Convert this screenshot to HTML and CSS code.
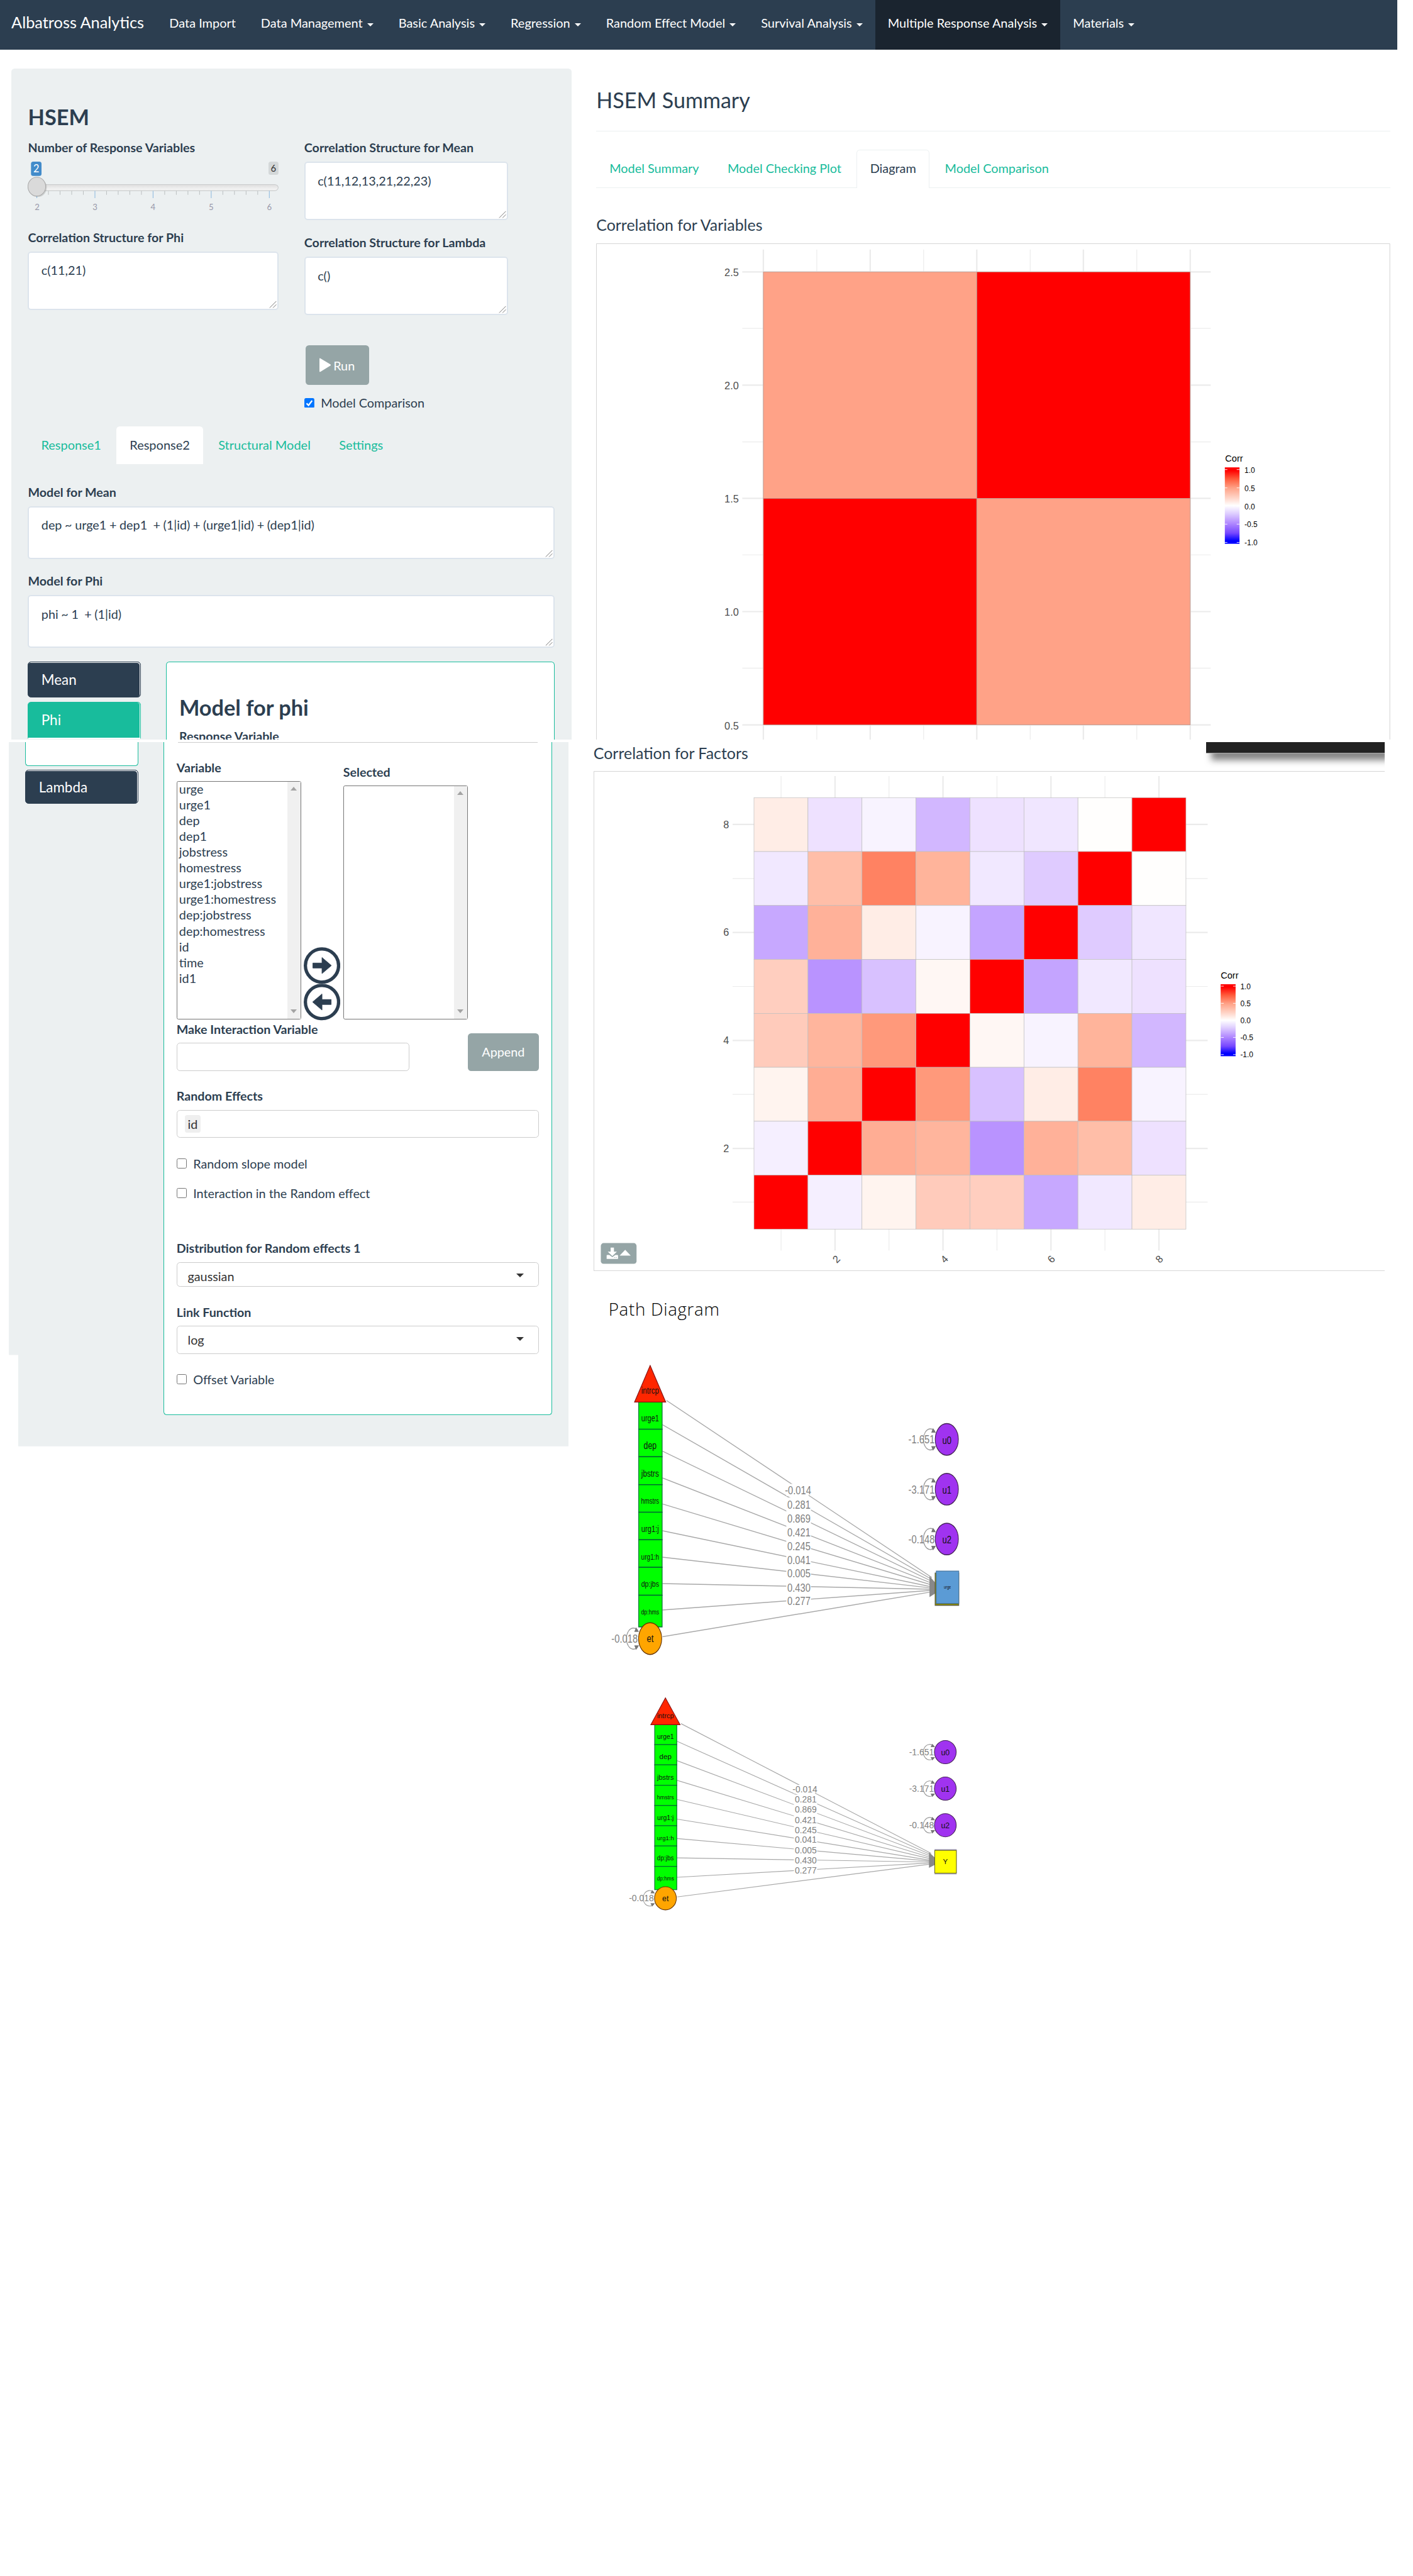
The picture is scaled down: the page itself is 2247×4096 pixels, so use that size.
FILE: index.html
```html
<!DOCTYPE html>
<html lang="en">
<head>
<meta charset="utf-8">
<title>Albatross Analytics</title>
<link rel="stylesheet" href="styles.css">
</head>
<body>
<nav class="navbar">
  <span class="brand">Albatross Analytics</span>
  <span class="nav-item">Data Import</span>
  <span class="nav-item">Data Management<i class="caret"></i></span>
  <span class="nav-item">Basic Analysis<i class="caret"></i></span>
  <span class="nav-item">Regression<i class="caret"></i></span>
  <span class="nav-item">Random Effect Model<i class="caret"></i></span>
  <span class="nav-item">Survival Analysis<i class="caret"></i></span>
  <span class="nav-item active">Multiple Response Analysis<i class="caret"></i></span>
  <span class="nav-item">Materials<i class="caret"></i></span>
</nav>
<main class="page">
  <aside class="sidebar">
    <section class="well well-top">
      <h2 class="title">HSEM</h2>
      <div class="params">
        <div class="params-left">
          <div class="label">Number of Response Variables</div>
          <svg class="slider" viewBox="51 283 453 130">
            <defs><linearGradient id="track" x1="0" y1="0" x2="0" y2="1"><stop offset="0" stop-color="#dedede"/><stop offset="1" stop-color="#f8f8f8"/></linearGradient></defs>
            <rect x="57" y="292" width="19" height="26" rx="4" fill="#428bca"/>
            <text x="66.500" y="311" class="s-badge on">2</text>
            <rect x="486" y="292" width="18" height="24" rx="4" fill="#d4d8d9"/>
            <text x="495" y="310" class="s-badge">6</text>
            <rect x="52" y="333.500" width="451.500" height="11" rx="6" fill="url(#track)" stroke="#c9cbcc" stroke-width="1.200"/>
            <path d="M88.500 345v7M109.500 345v7M130.500 345v7M151.500 345v7M193.500 345v7M214.500 345v7M235.500 345v7M256.500 345v7M298.500 345v7M319.500 345v7M340.500 345v7M361.500 345v7M403.500 345v7M424.500 345v7M445.500 345v7M466.500 345v7" stroke="#b4b8ba"/>
            <path d="M67.500 345v13M172.500 345v13M277.500 345v13M382.500 345v13M487.500 345v13" stroke="#8fbadf" stroke-width="1.200"/>
            <ellipse cx="69" cy="339" rx="16.500" ry="17" fill="#000" opacity=".13"/>
            <ellipse cx="67.500" cy="337.300" rx="16" ry="17" fill="#dadada" stroke="#ababab" stroke-width="1.200"/>
            <text x="68" y="379" class="s-tick">2</text><text x="172.500" y="379" class="s-tick">3</text><text x="277.500" y="379" class="s-tick">4</text><text x="382.500" y="379" class="s-tick">5</text><text x="487.500" y="379" class="s-tick">6</text>
          </svg>
          <div class="label">Correlation Structure for Phi</div>
          <div class="area">c(11,21)<svg class="grip" viewBox="0 0 14 14"><path d="M1 13L13 1M7 13l6-6"/></svg></div>
        </div>
        <div class="params-right">
          <div class="label">Correlation Structure for Mean</div>
          <div class="area">c(11,12,13,21,22,23)<svg class="grip" viewBox="0 0 14 14"><path d="M1 13L13 1M7 13l6-6"/></svg></div>
          <div class="label lambda-label">Correlation Structure for Lambda</div>
          <div class="area">c()<svg class="grip" viewBox="0 0 14 14"><path d="M1 13L13 1M7 13l6-6"/></svg></div>
          <div class="btn run"><svg class="play" viewBox="0 0 21 26"><path d="M0 2Q0 0 2 1L20 12Q21 13 20 14L2 25Q0 26 0 24z" fill="#fff"/></svg>Run</div>
          <div class="check compare"><svg class="box" viewBox="0 0 18 18"><rect width="18" height="18" rx="3" fill="#0075ff"/><path d="M4 9.500l3.500 3.500L14 4.500" fill="none" stroke="#fff" stroke-width="2.600"/></svg>Model Comparison</div>
        </div>
      </div>
      <div class="tabs side-tabs">
        <span class="tab">Response1</span><span class="tab current">Response2</span><span class="tab">Structural Model</span><span class="tab">Settings</span>
      </div>
      <div class="label mean-label">Model for Mean</div>
      <div class="area wide">dep ~ urge1 + dep1&nbsp; + (1|id) + (urge1|id) + (dep1|id)<svg class="grip" viewBox="0 0 14 14"><path d="M1 13L13 1M7 13l6-6"/></svg></div>
      <div class="label phi-label">Model for Phi</div>
      <div class="area wide">phi ~ 1&nbsp; + (1|id)<svg class="grip" viewBox="0 0 14 14"><path d="M1 13L13 1M7 13l6-6"/></svg></div>
      <div class="split">
        <div class="pills">
          <div class="pill">Mean</div>
          <div class="pill phi">Phi</div>
        </div>
        <div class="card card-top">
          <h2 class="title">Model for phi</h2>
          <div class="label">Response Variable</div>
        </div>
      </div>
    </section>
    <section class="well well-bottom">
      <div class="split">
        <div class="pills">
          <div class="pill-rest"></div>
          <div class="pill lambda">Lambda</div>
        </div>
        <div class="card card-bottom">
          <div class="select-edge"></div>
          <div class="picker">
            <div class="pick">
              <div class="label">Variable</div>
              <div class="list">
                <ul class="options"><li>urge</li><li>urge1</li><li>dep</li><li>dep1</li><li>jobstress</li><li>homestress</li><li>urge1:jobstress</li><li>urge1:homestress</li><li>dep:jobstress</li><li>dep:homestress</li><li>id</li><li>time</li><li>id1</li></ul>
                <div class="scroll"><i class="up"></i><i class="down"></i></div>
              </div>
            </div>
            <div class="arrows">
              <svg viewBox="0 0 66 66"><circle cx="33" cy="33" r="30" fill="#fff" stroke="#2c3e50" stroke-width="6"/><path d="M16.500 28.500h16.500v-10L50 33 33 47.500v-10H16.500z" fill="#2c3e50" stroke="#2c3e50"/></svg>
              <svg viewBox="0 0 66 66"><circle cx="33" cy="33" r="30" fill="#fff" stroke="#2c3e50" stroke-width="6"/><path d="M49.500 28.500H33v-10L16 33l17 14.500v-10h16.500z" fill="#2c3e50" stroke="#2c3e50"/></svg>
            </div>
            <div class="pick">
              <div class="label">Selected</div>
              <div class="list short"><ul class="options"></ul><div class="scroll"><i class="up"></i><i class="down"></i></div></div>
            </div>
          </div>
          <div class="interaction">
            <div class="interaction-field">
              <div class="label">Make Interaction Variable</div>
              <div class="field"></div>
            </div>
            <div class="btn append">Append</div>
          </div>
          <div class="label gap">Random Effects</div>
          <div class="field"><span class="chip">id</span></div>
          <div class="check gap"><i class="empty"></i>Random slope model</div>
          <div class="check next"><i class="empty"></i>Interaction in the Random effect</div>
          <div class="label dist">Distribution for Random effects 1</div>
          <div class="field low">gaussian<i class="drop"></i></div>
          <div class="label gap">Link Function</div>
          <div class="field">log<i class="drop"></i></div>
          <div class="check gap"><i class="empty"></i>Offset Variable</div>
        </div>
      </div>
    </section>
  </aside>
  <section class="results">
    <div class="upper">
      <h2 class="title light">HSEM Summary</h2>
      <div class="rule"></div>
      <div class="tabs main-tabs">
        <span class="tab">Model Summary</span><span class="tab">Model Checking Plot</span><span class="tab current">Diagram</span><span class="tab">Model Comparison</span>
      </div>
      <h4 class="subtitle">Correlation for Variables</h4>
      <svg class="plot plot-vars" viewBox="1077 440 1434 896">
        <defs><linearGradient id="corr" x1="0" y1="0" x2="0" y2="1"><stop offset="0" stop-color="#f00"/><stop offset=".04" stop-color="#f00"/><stop offset=".15" stop-color="#ff5a3a"/><stop offset=".27" stop-color="#ffa287"/><stop offset=".4" stop-color="#ffd5c8"/><stop offset=".5" stop-color="#fff"/><stop offset=".6" stop-color="#e0d0ff"/><stop offset=".73" stop-color="#b28aff"/><stop offset=".86" stop-color="#7748ff"/><stop offset=".96" stop-color="#00f"/><stop offset="1" stop-color="#00f"/></linearGradient></defs>
        <path d="M1077.500 1336V440.500H2510.500V1336" fill="none" stroke="#ccc"/>
        <path d="M1379 451v885M1572 451v885M1764.500 451v885M1957 451v885M2150 451v885M1341 491.500h846M1341 696h846M1341 900.500h846M1341 1105h846M1341 1309.500h846" stroke="#ebebeb" stroke-width="2.500"/>
        <path d="M1475.500 451v885M1668.500 451v885M1861 451v885M2053.500 451v885M1341 593.500h846M1341 798.500h846M1341 1002.500h846M1341 1207h846" stroke="#ebebeb" stroke-width="1.300"/>
        <g stroke="#be9a90"><rect x="1379" y="491.500" width="385.500" height="409" fill="#ffa287"/><rect x="1764.500" y="491.500" width="385.500" height="409" fill="red"/><rect x="1379" y="900.500" width="385.500" height="409" fill="red"/><rect x="1764.500" y="900.500" width="385.500" height="409" fill="#ffa287"/></g>
        <g class="axis end"><text x="1334.500" y="498.500">2.5</text><text x="1334.500" y="703.500">2.0</text><text x="1334.500" y="908">1.5</text><text x="1334.500" y="1112.500">1.0</text><text x="1334.500" y="1317.500">0.5</text></g>
        <text x="2213" y="834.500" class="legend-title">Corr</text>
        <rect x="2212.500" y="844.500" width="26.500" height="138" fill="url(#corr)"/>
        <path d="M2212 848.500h5m17 0h5M2212 881.500h5m17 0h5M2212 914.500h5m17 0h5M2212 947h5m17 0h5M2212 980h5m17 0h5" stroke="#fff"/>
        <g class="legend"><text x="2248" y="854">1.0</text><text x="2248" y="887">0.5</text><text x="2248" y="920">0.0</text><text x="2248" y="952.500">-0.5</text><text x="2248" y="985">-1.0</text></g>
      </svg>
    </div>
    <div class="lower">
      <div class="lower-head"><h4 class="subtitle">Correlation for Factors</h4><div class="toast"></div></div>
      <svg class="plot plot-factors" viewBox="1072 1392 1429 903">
        <path d="M2501 1392.500H1072.500V2294.500H2501" fill="none" stroke="#ccc"/>
        <path d="M1508 1401v857M1703 1401v857M1898 1401v857M2093 1401v857M1323 1488.500h858M1323 1683.500h858M1323 1878.500h858M1323 2073.500h858" stroke="#ebebeb" stroke-width="2.500"/>
        <path d="M1410.500 1401v857M1605.500 1401v857M1800.500 1401v857M1995.500 1401v857M1323 1586h858M1323 1781h858M1323 1976h858M1323 2170.500h858" stroke="#ebebeb" stroke-width="1.300"/>
        <g transform="translate(1361.600 1440) scale(97.525 97.412)" stroke="#bebebe" stroke-width=".008">
          <rect x="0" y="0" width="1" height="1" fill="#ffede6"/><rect x="1" y="0" width="1" height="1" fill="#eee1ff"/><rect x="2" y="0" width="1" height="1" fill="#f8f3ff"/><rect x="3" y="0" width="1" height="1" fill="#d2b7ff"/><rect x="4" y="0" width="1" height="1" fill="#eee1ff"/><rect x="5" y="0" width="1" height="1" fill="#f0e6ff"/><rect x="6" y="0" width="1" height="1" fill="#fffefd"/><rect x="7" y="0" width="1" height="1" fill="red"/>
          <rect x="0" y="1" width="1" height="1" fill="#f1e8ff"/><rect x="1" y="1" width="1" height="1" fill="#ffbea8"/><rect x="2" y="1" width="1" height="1" fill="#ff8262"/><rect x="3" y="1" width="1" height="1" fill="#ffb49b"/><rect x="4" y="1" width="1" height="1" fill="#f1e8ff"/><rect x="5" y="1" width="1" height="1" fill="#dfcbff"/><rect x="6" y="1" width="1" height="1" fill="red"/><rect x="7" y="1" width="1" height="1" fill="#fffefd"/>
          <rect x="0" y="2" width="1" height="1" fill="#c7a8ff"/><rect x="1" y="2" width="1" height="1" fill="#ffb199"/><rect x="2" y="2" width="1" height="1" fill="#ffede6"/><rect x="3" y="2" width="1" height="1" fill="#f8f3ff"/><rect x="4" y="2" width="1" height="1" fill="#c4a4ff"/><rect x="5" y="2" width="1" height="1" fill="red"/><rect x="6" y="2" width="1" height="1" fill="#dfcbff"/><rect x="7" y="2" width="1" height="1" fill="#f0e6ff"/>
          <rect x="0" y="3" width="1" height="1" fill="#ffcebf"/><rect x="1" y="3" width="1" height="1" fill="#b993ff"/><rect x="2" y="3" width="1" height="1" fill="#d8c1ff"/><rect x="3" y="3" width="1" height="1" fill="#fff7f4"/><rect x="4" y="3" width="1" height="1" fill="red"/><rect x="5" y="3" width="1" height="1" fill="#c4a4ff"/><rect x="6" y="3" width="1" height="1" fill="#f1e8ff"/><rect x="7" y="3" width="1" height="1" fill="#eee1ff"/>
          <rect x="0" y="4" width="1" height="1" fill="#ffcbbb"/><rect x="1" y="4" width="1" height="1" fill="#ffb59d"/><rect x="2" y="4" width="1" height="1" fill="#ff997b"/><rect x="3" y="4" width="1" height="1" fill="red"/><rect x="4" y="4" width="1" height="1" fill="#fff7f4"/><rect x="5" y="4" width="1" height="1" fill="#f8f3ff"/><rect x="6" y="4" width="1" height="1" fill="#ffb49b"/><rect x="7" y="4" width="1" height="1" fill="#d2b7ff"/>
          <rect x="0" y="5" width="1" height="1" fill="#fff4ef"/><rect x="1" y="5" width="1" height="1" fill="#ffad94"/><rect x="2" y="5" width="1" height="1" fill="red"/><rect x="3" y="5" width="1" height="1" fill="#ff997b"/><rect x="4" y="5" width="1" height="1" fill="#d8c1ff"/><rect x="5" y="5" width="1" height="1" fill="#ffede6"/><rect x="6" y="5" width="1" height="1" fill="#ff8262"/><rect x="7" y="5" width="1" height="1" fill="#f8f3ff"/>
          <rect x="0" y="6" width="1" height="1" fill="#f5efff"/><rect x="1" y="6" width="1" height="1" fill="red"/><rect x="2" y="6" width="1" height="1" fill="#ffad94"/><rect x="3" y="6" width="1" height="1" fill="#ffb59d"/><rect x="4" y="6" width="1" height="1" fill="#b993ff"/><rect x="5" y="6" width="1" height="1" fill="#ffb199"/><rect x="6" y="6" width="1" height="1" fill="#ffbea8"/><rect x="7" y="6" width="1" height="1" fill="#eee1ff"/>
          <rect x="0" y="7" width="1" height="1" fill="red"/><rect x="1" y="7" width="1" height="1" fill="#f5efff"/><rect x="2" y="7" width="1" height="1" fill="#fff4ef"/><rect x="3" y="7" width="1" height="1" fill="#ffcbbb"/><rect x="4" y="7" width="1" height="1" fill="#ffcebf"/><rect x="5" y="7" width="1" height="1" fill="#c7a8ff"/><rect x="6" y="7" width="1" height="1" fill="#f1e8ff"/><rect x="7" y="7" width="1" height="1" fill="#ffede6"/>
        </g>
        <g class="axis end"><text x="1316.500" y="1495">8</text><text x="1316.500" y="1690">6</text><text x="1316.500" y="1885">4</text><text x="1316.500" y="2080">2</text></g>
        <g class="axis mid"><text transform="translate(1515 2278) rotate(-45)">2</text><text transform="translate(1710 2278) rotate(-45)">4</text><text transform="translate(1903 2278) rotate(-45)">6</text><text transform="translate(2098 2278) rotate(-45)">8</text></g>
        <text x="2204.500" y="1767" class="legend-title">Corr</text>
        <rect x="2204.500" y="1777" width="27" height="130" fill="url(#corr)"/>
        <path d="M2205 1780.500h5m17 0h5M2205 1811.500h5m17 0h5M2205 1842.500h5m17 0h5M2205 1873h5m17 0h5M2205 1904h5m17 0h5" stroke="#fff"/>
        <g class="legend"><text x="2240" y="1786">1.0</text><text x="2240" y="1816.500">0.5</text><text x="2240" y="1847.500">0.0</text><text x="2240" y="1878.500">-0.5</text><text x="2240" y="1909">-1.0</text></g>
        <rect x="1085" y="2244.500" width="64.500" height="37.500" rx="5" fill="#95a5a6"/>
        <path d="M1102.700 2252.500h6v7.500h5.300l-8.200 8-8.300-8h5.200zM1095.500 2267q0-1 1-1h4l5.300 4 5.300-4h4q1 0 1 1v6h-20.600zM1119 2267l10-10.500 10 10.500z" fill="#fff"/>
        <path d="M1109 2270.500h1.500m1.500 0h1.500" stroke="#95a5a6"/>
      </svg>
      <h4 class="path-title">Path Diagram</h4>
      <div class="paths">
      <svg class="path-tall" viewBox="1094 3056 640 396" preserveAspectRatio="none">
        <g stroke="#a8a8a8" stroke-width="1.200"><path d="M1229 3113.500L1681 3348M1222 3145.500L1681 3350.500M1222 3180.500L1681 3353M1222 3216L1681 3355.500M1222 3250.500L1681 3358M1222 3286L1681 3360.500M1222 3321L1681 3362M1222 3356L1681 3363.500M1222 3391L1681 3365M1222 3426.500L1681 3367"/></g>
        <path d="M1677 3346l10 9v14l-10 5z" fill="#888"/>
        <path d="M1433 3224h38v16h-38zM1433 3242h42v144h-42z" fill="#fff"/>
        <g class="p-val"><text x="1453" y="3238">-0.014</text><text x="1454.500" y="3256.500">0.281</text><text x="1454.500" y="3275">0.869</text><text x="1454.500" y="3293.500">0.421</text><text x="1454.500" y="3311.500">0.245</text><text x="1454.500" y="3330">0.041</text><text x="1454.500" y="3348">0.005</text><text x="1454.500" y="3366.500">0.430</text><text x="1454.500" y="3384.500">0.277</text></g>
        <g fill="#0f0" stroke="#063" stroke-width="1.200"><rect x="1181.500" y="3115" width="40" height="36.500"/><rect x="1181.500" y="3151.500" width="40" height="36.500"/><rect x="1181.500" y="3188" width="40" height="37"/><rect x="1181.500" y="3225" width="40" height="36.500"/><rect x="1181.500" y="3261.500" width="40" height="36.500"/><rect x="1181.500" y="3298" width="40" height="36.500"/><rect x="1181.500" y="3334.500" width="40" height="37"/><rect x="1181.500" y="3371.500" width="40" height="42"/></g>
        <path d="M1201 3067l26.500 48.500h-53z" fill="#ff2600" stroke="#811" stroke-width="1.200"/>
        <g class="p-name"><text x="1201" y="3104" font-size="12.400">intrcp</text><text x="1201" y="3141" font-size="11.800">urge1</text><text x="1201" y="3178" font-size="13.200">dep</text><text x="1201" y="3214.500" font-size="12.600">jbstrs</text><text x="1201" y="3250.500" font-size="10.200">hmstrs</text><text x="1201" y="3287.500" font-size="12">urg1:j</text><text x="1201" y="3324" font-size="10.800">urg1:h</text><text x="1201" y="3360.500" font-size="11.400">dp:jbs</text><text x="1201" y="3397" font-size="9.400">dp:hms</text></g>
        <g fill="none" stroke="#999" stroke-width="1.200"><path d="M1180 3418a12 14 0 1 0 0 22M1686 3154a12 14 0 1 0 0 22M1686 3220a12 14 0 1 0 0 22M1686 3286a12 14 0 1 0 0 22"/></g>
        <path d="M1182 3420l-8 0 3-6zM1182 3438l-8 0 3 6zM1688 3156l-8 0 3-6zM1688 3174l-8 0 3 6zM1688 3222l-8 0 3-6zM1688 3240l-8 0 3 6zM1688 3288l-8 0 3-6zM1688 3306l-8 0 3 6z" fill="#777"/>
        <g class="p-val"><text x="1157.500" y="3434.500">-0.018</text><text x="1663.500" y="3170.500">-1.651</text><text x="1663.500" y="3237">-3.171</text><text x="1663.500" y="3303">-0.148</text></g>
        <ellipse cx="1201" cy="3429" rx="19.700" ry="21" fill="orange" stroke="#630" stroke-width="1.200"/>
        <g fill="#a033f0" stroke="#425" stroke-width="1.200"><ellipse cx="1706.500" cy="3165" rx="19.700" ry="21"/><ellipse cx="1706.500" cy="3231" rx="19.700" ry="21"/><ellipse cx="1706.500" cy="3297" rx="19.700" ry="21"/></g>
        <g class="p-name" font-size="14"><text x="1201" y="3434">et</text><text x="1706.500" y="3171">u0</text><text x="1706.500" y="3237">u1</text><text x="1706.500" y="3303">u2</text></g>
        <rect x="1686.500" y="3342" width="40.500" height="43" fill="#8a8600" stroke="#554"/><rect x="1688.500" y="3339.500" width="38.500" height="43" fill="#5b9bd5" stroke="#41719c"/>
        <text class="p-name" x="1707.500" y="3363" font-size="6">urge</text>
      </svg>
      <svg class="path-short" viewBox="1094 3056 640 396">
        <g stroke="#a8a8a8" stroke-width="1.300"><path d="M1229 3113.500L1681 3348M1222 3145.500L1681 3350.500M1222 3180.500L1681 3353M1222 3216L1681 3355.500M1222 3250.500L1681 3358M1222 3286L1681 3360.500M1222 3321L1681 3362M1222 3356L1681 3363.500M1222 3391L1681 3365M1222 3426.500L1681 3367"/></g>
        <path d="M1677 3346l10 9v14l-10 5z" fill="#888"/>
        <path d="M1433 3224h38v16h-38zM1433 3242h42v144h-42z" fill="#fff"/>
        <g class="p-val"><text x="1453" y="3237.500">-0.014</text><text x="1454.500" y="3256">0.281</text><text x="1454.500" y="3274.500">0.869</text><text x="1454.500" y="3293">0.421</text><text x="1454.500" y="3311">0.245</text><text x="1454.500" y="3329">0.041</text><text x="1454.500" y="3347.500">0.005</text><text x="1454.500" y="3366">0.430</text><text x="1454.500" y="3384">0.277</text></g>
        <g fill="#0f0" stroke="#063" stroke-width="1.200"><rect x="1181.500" y="3115" width="40" height="36.500"/><rect x="1181.500" y="3151.500" width="40" height="36.500"/><rect x="1181.500" y="3188" width="40" height="37"/><rect x="1181.500" y="3225" width="40" height="36.500"/><rect x="1181.500" y="3261.500" width="40" height="36.500"/><rect x="1181.500" y="3298" width="40" height="36.500"/><rect x="1181.500" y="3334.500" width="40" height="37"/><rect x="1181.500" y="3371.500" width="40" height="42"/></g>
        <path d="M1201 3067l26.500 48.500h-53z" fill="#ff2600" stroke="#811" stroke-width="1.200"/>
        <g class="p-name"><text x="1201" y="3104" font-size="12.400">intrcp</text><text x="1201" y="3141" font-size="11.800">urge1</text><text x="1201" y="3178" font-size="13.200">dep</text><text x="1201" y="3214.500" font-size="12.600">jbstrs</text><text x="1201" y="3250.500" font-size="10.200">hmstrs</text><text x="1201" y="3287.500" font-size="12">urg1:j</text><text x="1201" y="3324" font-size="10.800">urg1:h</text><text x="1201" y="3360.500" font-size="11.400">dp:jbs</text><text x="1201" y="3397" font-size="9.400">dp:hms</text></g>
        <g fill="none" stroke="#999" stroke-width="1.200"><path d="M1180 3418a12 14 0 1 0 0 22M1686 3154a12 14 0 1 0 0 22M1686 3220a12 14 0 1 0 0 22M1686 3286a12 14 0 1 0 0 22"/></g>
        <path d="M1182 3420l-8 0 3-6zM1182 3438l-8 0 3 6zM1688 3156l-8 0 3-6zM1688 3174l-8 0 3 6zM1688 3222l-8 0 3-6zM1688 3240l-8 0 3 6zM1688 3288l-8 0 3-6zM1688 3306l-8 0 3 6z" fill="#777"/>
        <g class="p-val"><text x="1157.500" y="3434.500">-0.018</text><text x="1663.500" y="3170.500">-1.651</text><text x="1663.500" y="3237">-3.171</text><text x="1663.500" y="3303">-0.148</text></g>
        <ellipse cx="1201" cy="3429" rx="19.700" ry="21" fill="orange" stroke="#630" stroke-width="1.200"/>
        <g fill="#a033f0" stroke="#425" stroke-width="1.200"><ellipse cx="1706.500" cy="3165" rx="19.700" ry="21"/><ellipse cx="1706.500" cy="3231" rx="19.700" ry="21"/><ellipse cx="1706.500" cy="3297" rx="19.700" ry="21"/></g>
        <g class="p-name" font-size="14"><text x="1201" y="3434">et</text><text x="1706.500" y="3171">u0</text><text x="1706.500" y="3237">u1</text><text x="1706.500" y="3303">u2</text></g>
        <rect x="1687" y="3340" width="40" height="46" fill="#b8b4c8"/><rect x="1687.500" y="3342.500" width="39" height="41" fill="#ff0" stroke="#550"/>
        <text class="p-name" x="1706.500" y="3367.500" font-size="13">Y</text>
      </svg>
      </div>
    </div>
  </section>
</main>
</body>
</html>
```
FILE: styles.css
```css
/* 1rem is ten design pixels */
html { font-size: 8.8048px; }
* { box-sizing: border-box; }
body { margin: 0; background: #fff; color: #2c3e50; font: 2.25rem/3.2rem Lato, sans-serif; height: 465.2rem; overflow: hidden; }
h2, h4, ul { margin: 0; padding: 0; list-style: none; }
svg { display: block; }

.navbar { display: flex; width: 252.4rem; height: 9rem; background: #2c3e50; color: #fff; white-space: nowrap; }
.brand { font-size: 2.88rem; line-height: 8.1rem; padding: 0 2.3rem 0 2.05rem; }
.nav-item { display: flex; align-items: center; padding: 0 2.27rem 0.75rem; font-size: 2.265rem; }
.nav-item.active { background: #1a242f; }
.caret { border: 0.6rem solid transparent; border-top-color: #fff; border-bottom: 0; margin: 0.7rem 0 0 0.8rem; }

.page { display: flex; }
.sidebar { width: 103.2rem; padding-top: 3.4rem; }
.well { background: #ecf0f1; }
.well-top { margin-left: 2.1rem; height: 121.2rem; padding: 6.6rem 3rem 0 2.95rem; border-radius: 0.6rem 0.6rem 0 0; overflow: hidden; }
.title { font-size: 3.9rem; line-height: 4.4rem; font-weight: 700; }
.title.light { font-weight: 400; font-size: 3.87rem; }
.label { font-weight: 700; font-size: 2.235rem; line-height: 3.2rem; white-space: nowrap; }
.params { display: flex; gap: 4.6rem; margin-top: 1.7rem; }
.params-left { width: 45.3rem; }
.params-right { width: 36.8rem; }
.slider { width: 45.3rem; height: 13rem; }
.s-badge { font-size: 17px; text-anchor: middle; fill: #333; }
.s-badge.on { fill: #fff; font-size: 18.5px; }
.s-tick { font-size: 15px; text-anchor: middle; fill: #99a; }
.area { position: relative; height: 10.6rem; margin-top: 0.9rem; padding: 1.55rem 2.2rem; border: 0.25rem solid #dce4ec; border-radius: 0.6rem; background: #fff; white-space: nowrap; }
.area.wide { height: 9.55rem; word-spacing: -0.05rem; }
.grip { position: absolute; right: 0.1rem; bottom: 0.1rem; width: 1.4rem; height: 1.4rem; fill: none; stroke: #666; stroke-width: 1; }
.lambda-label { margin-top: 2.45rem; }
.btn { display: flex; align-items: center; justify-content: center; background: #95a5a6; color: #fff; border-radius: 0.6rem; }
.run { width: 11.5rem; height: 7.2rem; margin: 5.4rem 0 0 0.2rem; }
.play { width: 2.1rem; height: 2.6rem; margin-right: 0.4rem; }
.check { display: flex; align-items: center; line-height: 3.2rem; white-space: nowrap; }
.compare { margin-top: 1.6rem; }
.box { width: 1.8rem; height: 1.8rem; margin-right: 1.2rem; }

.tabs { display: flex; gap: 0.4rem; color: #18bc9c; white-space: nowrap; }
.tab { padding: 1.73rem 2.38rem 0; height: 6.8rem; }
.side-tabs .tab { font-size: 2.27rem; }
.main-tabs .tab { font-size: 2.255rem; }
.current { background: #fff; color: #2c3e50; border-radius: 0.6rem 0.6rem 0 0; }
.side-tabs { margin-top: 2.65rem; }
.mean-label { margin-top: 3.5rem; }
.phi-label { margin-top: 2.45rem; }
.split { display: flex; gap: 4.5rem; }
.well-top .split { margin-top: 2.45rem; }
.pills { width: 20.4rem; display: flex; flex-direction: column; gap: 0.8rem; }
.pill { height: 6.5rem; padding-left: 2.3rem; font-size: 2.55rem; line-height: 6.4rem; background: #2c3e50; color: #fff; border: 0.12rem solid #2c3e50; border-radius: 0.6rem; box-shadow: inset -1px 1px 0 #fff; }
.pill.phi { border-color: #18bc9c; background: #18bc9c; height: 6.7rem; border-bottom: 0.3rem solid #fff; border-radius: 0.6rem 0.6rem 0 0; box-shadow: inset -1px 0 0 #fff; }
.pill.lambda { height: 6.1rem; line-height: 6.1rem; }
.pill-rest { height: 4.3rem; background: #fff; border: 0.12rem solid #18bc9c; border-top: 0; border-radius: 0 0 0.6rem 0.6rem; }
.card { width: 70.2rem; background: #fff; border: 0.12rem solid #18bc9c; }
.card-top { height: 15rem; padding: 6.05rem 2.3rem 0; border-radius: 0.6rem 0.6rem 0 0; border-bottom: 0; }
.card-top .label { margin-top: 1.35rem; }

.well-bottom { margin: 0.4rem 0 0 1.6rem; width: 101.1rem; height: 127.2rem; padding-left: 3rem; clip-path: polygon(0 0, 100% 0, 100% 100%, 1.7rem 100%, 1.7rem 110.7rem, 0 110.7rem); }
.well-bottom .pills { gap: 0.7rem; }
.card-bottom { height: 121.5rem; border-top: 0; border-radius: 0 0 0.6rem 0.6rem; padding: 0 2.28rem; }
.select-edge { height: 0.12rem; background: #ccc; margin: 0 0.2rem; }
.picker { display: flex; align-items: flex-end; height: 50rem; }
.pick { width: 22.5rem; }
.list { display: flex; justify-content: space-between; height: 43.1rem; margin-top: 0.75rem; border: 0.12rem solid #767676; border-radius: 0.3rem; }
.list.short { height: 42.3rem; }
.options { padding-left: 0.35rem; margin-top: -0.1rem; line-height: 2.85rem; white-space: nowrap; }
.scroll { width: 2.4rem; background: #f0f0f0; display: flex; flex-direction: column; justify-content: space-between; align-items: center; padding: 1rem 0; }
.up, .down { border: 0.6rem solid transparent; }
.up { border-bottom: 0.7rem solid #a3a3a3; border-top: 0; }
.down { border-top: 0.7rem solid #a3a3a3; border-bottom: 0; }
.arrows { width: 6.6rem; margin: 0 0.5rem -0.2rem; }
.arrows svg { width: 6.6rem; height: 6.65rem; }
.interaction { display: flex; justify-content: space-between; align-items: flex-end; height: 9.3rem; }
.interaction-field { width: 42.1rem; }
.field { position: relative; height: 5.1rem; margin-top: 0.8rem; padding: 0.8rem 1.9rem; border: 0.12rem solid #ccc; border-radius: 0.6rem; color: #333; }
.field.low { height: 4.5rem; }
.append { width: 12.8rem; height: 6.8rem; padding-bottom: 0.2rem; }
.gap { margin-top: 3rem; }
.next { margin-top: 2.15rem; }
.dist { margin-top: 6.85rem; }
.chip { display: inline-block; background: #efefef; border-radius: 0.4rem; padding: 0 0.5rem; margin-left: -0.5rem; }
.empty { width: 1.8rem; height: 1.8rem; margin-right: 1.2rem; border: 0.12rem solid #767676; border-radius: 0.3rem; }
.drop { position: absolute; right: 2.6rem; top: 2rem; border: 0.75rem solid transparent; border-top-color: #333; border-bottom: 0; }

.results { width: 152rem; padding-left: 4.5rem; }
.upper { height: 124.6rem; padding-top: 6.85rem; width: 143.4rem; }
.rule { height: 0.15rem; background: #ecf0f1; margin-top: 3.35rem; }
.main-tabs { margin-top: 3.3rem; height: 6.95rem; border-bottom: 0.15rem solid #ecf0f1; }
.main-tabs .current { border: 0.15rem solid #ecf0f1; border-bottom: 0; height: 6.95rem; padding: 1.58rem 2.3rem 0; }
.subtitle { font-size: 2.83rem; line-height: 3.6rem; font-weight: 400; }
.upper .subtitle { margin-top: 4.85rem; }
.plot-vars { width: 143.4rem; height: 89.6rem; margin-top: 1.55rem; }
.lower { margin: 0.4rem 0 0 -0.5rem; width: 142.9rem; }
.lower-head { display: flex; justify-content: space-between; height: 5.2rem; padding-top: 0.2rem; overflow: hidden; background: #fff; }
.toast { width: 32.3rem; height: 2.1rem; margin-top: -0.2rem; background: #222; border-bottom: 0.15rem solid #aaa; box-shadow: 0.9rem 1.2rem 1.2rem rgba(0, 0, 0, 0.5); }
.plot-factors { width: 142.9rem; height: 90.3rem; }
text { font-family: "Liberation Sans", sans-serif; }
.slider text { font-family: Lato, sans-serif; }
.axis { font-size: 18.5px; fill: #4d4d4d; }
.end { text-anchor: end; }
.mid { text-anchor: middle; }
.legend { font-size: 13.6px; fill: #000; }
.legend-title { font-size: 16.6px; fill: #000; }
.path-title { font: 300 3.15rem/4.4rem "Open Sans", "Noto Sans", sans-serif; letter-spacing: 0.08rem; color: #000; margin: 4.7rem 0 0 2.7rem; }
/* both diagrams share one drawing space; the first is stretched */
.path-tall { width: 67.84rem; height: 53.96rem; margin: 6.45rem 0 0 -1.15rem; }
.path-short { width: 64rem; height: 39.6rem; margin: 6.55rem 0 0 2.25rem; }
.p-val { font-size: 15.8px; fill: #808080; text-anchor: middle; }
.p-name { fill: #111; text-anchor: middle; }
```
